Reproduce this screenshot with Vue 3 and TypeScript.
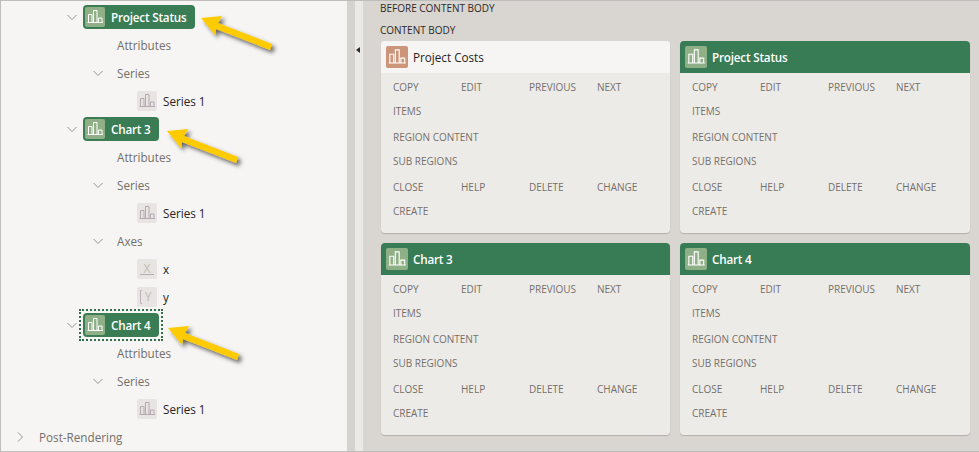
<script setup lang="ts">
type TreeRow = {
  label: string
  depth: number
  open?: boolean
  closed?: boolean
  kind?: 'region' | 'series' | 'axis-x' | 'axis-y'
  focused?: boolean
}

type Card = {
  title: string
  active: boolean
}

const rows: TreeRow[] = [
  { label: 'Project Status', depth: 2, open: true, kind: 'region' },
  { label: 'Attributes', depth: 3 },
  { label: 'Series', depth: 3, open: true },
  { label: 'Series 1', depth: 4, kind: 'series' },
  { label: 'Chart 3', depth: 2, open: true, kind: 'region' },
  { label: 'Attributes', depth: 3 },
  { label: 'Series', depth: 3, open: true },
  { label: 'Series 1', depth: 4, kind: 'series' },
  { label: 'Axes', depth: 3, open: true },
  { label: 'x', depth: 4, kind: 'axis-x' },
  { label: 'y', depth: 4, kind: 'axis-y' },
  { label: 'Chart 4', depth: 2, open: true, kind: 'region', focused: true },
  { label: 'Attributes', depth: 3 },
  { label: 'Series', depth: 3, open: true },
  { label: 'Series 1', depth: 4, kind: 'series' },
  { label: 'Post-Rendering', depth: 0, closed: true },
]

const cards: Card[] = [
  { title: 'Project Costs', active: false },
  { title: 'Project Status', active: true },
  { title: 'Chart 3', active: true },
  { title: 'Chart 4', active: true },
]

const slotGroups = [
  ['Copy', 'Edit', 'Previous', 'Next', 'Items'],
  ['Region Content', 'Sub Regions'],
  ['Close', 'Help', 'Delete', 'Change', 'Create'],
]

// tips of the three callouts, in page pixels
const arrows = [
  { x: 201, y: 18 },
  { x: 167, y: 131 },
  { x: 168, y: 328 },
]
</script>

<template>
  <div class="page">
    <svg class="defs" width="0" height="0" aria-hidden="true">
      <symbol id="bars" viewBox="0 0 20 20">
        <path
          d="M2.5 15.5H18M3.5 15V7.5H7V15M8.5 15V3.5H12V15M13.5 15v-4H17v4"
          fill="none"
          stroke="currentColor"
          stroke-width="1"
        />
      </symbol>
    </svg>

    <aside class="tree">
      <div
        v-for="(row, i) in rows"
        :key="i"
        class="row"
        :style="{ paddingLeft: 14 + row.depth * 26 + 'px' }"
      >
        <svg v-if="row.open || row.closed" class="twisty" width="12" height="12" viewBox="0 0 12 12">
          <path v-if="row.open" d="M1.5 4l4.5 4.5L10.5 4" fill="none" stroke="#98938d" stroke-width="1" />
          <path v-else d="M4 1.5L8.5 6 4 10.5" fill="none" stroke="#98938d" stroke-width="1" />
        </svg>
        <span v-else class="twisty"></span>

        <span v-if="row.kind === 'region'" class="badge-wrap" :class="{ focused: row.focused }">
          <span class="badge">
            <span class="badge-icon">
              <svg width="20" height="20"><use href="#bars" /></svg>
            </span>
            <span class="badge-text">{{ row.label }}</span>
          </span>
        </span>

        <template v-else-if="row.kind">
          <span class="leaf-icon">
            <svg v-if="row.kind === 'series'" class="series-bars" width="20" height="20"><use href="#bars" /></svg>
            <svg v-else width="20" height="20" viewBox="0 0 20 20">
              <template v-if="row.kind === 'axis-x'">
                <text x="10" y="14" text-anchor="middle" class="axis-letter">X</text>
                <path d="M3 15.5h14" stroke="#b6abb4" stroke-width="1" />
              </template>
              <template v-else>
                <text x="11" y="14" text-anchor="middle" class="axis-letter">Y</text>
                <path d="M5 3.5H3.5v13H5" fill="none" stroke="#c0b0c0" stroke-width="1" />
              </template>
            </svg>
          </span>
          <span class="leaf-text">{{ row.label }}</span>
        </template>

        <span v-else class="label">{{ row.label }}</span>
      </div>
    </aside>

    <div class="splitter">
      <span class="grip"></span>
    </div>
    <div class="gutter"></div>

    <main class="main">
      <div class="slot-title first">Before Content Body</div>
      <div class="slot-title">Content Body</div>
      <div class="cards">
        <section v-for="card in cards" :key="card.title" class="card">
          <header class="card-head" :class="{ active: card.active }">
            <span class="card-icon">
              <svg width="22" height="22"><use href="#bars" /></svg>
            </span>
            <span class="card-title">{{ card.title }}</span>
          </header>
          <div class="card-body">
            <div v-for="(group, g) in slotGroups" :key="g" class="slots">
              <span
                v-for="name in group"
                :key="name"
                class="slot"
                :class="{ wide: group.length === 2 }"
              >{{ name }}</span>
            </div>
          </div>
        </section>
      </div>
    </main>

    <svg class="arrows" width="979" height="452" viewBox="0 0 979 452">
      <defs>
        <filter id="arrow-shadow" x="-30%" y="-50%" width="170%" height="220%">
          <feDropShadow dx="3" dy="3" stdDeviation="2" flood-color="#000" flood-opacity="0.6" />
        </filter>
      </defs>
      <path
        v-for="(a, i) in arrows"
        :key="i"
        :transform="`translate(${a.x} ${a.y})`"
        d="M0 0L21 -2L17 5L71 26L69 32L15 11L14 17Z"
        fill="#fecb00"
        filter="url(#arrow-shadow)"
      />
    </svg>
  </div>
</template>

<style scoped>
.page {
  position: relative;
  display: flex;
  width: 979px;
  height: 452px;
  box-sizing: border-box;
  overflow: hidden;
  border-top: 1px solid #bdbdbb;
  border-left: 1px solid #bdbdbb;
  border-bottom: 1px solid #bdbdbb;
  background: #d9d5d0;
  font-family: 'Open Sans', 'Liberation Sans', sans-serif;
}
.defs {
  position: absolute;
}
.tree {
  width: 346px;
  flex: none;
  box-sizing: border-box;
  padding-top: 2px;
  background: #f6f5f3;
}
.row {
  display: flex;
  align-items: center;
  height: 28px;
  margin-left: -1px;
  font-size: 11.7px;
}
.twisty {
  flex: none;
  width: 12px;
  height: 12px;
}
.label {
  margin-left: 13px;
  color: #736f6a;
}
.badge-wrap {
  margin-left: 5px;
}
.badge-wrap.focused {
  outline: 2px dotted #2f6f4c;
  outline-offset: 2px;
}
.badge {
  display: flex;
  align-items: center;
  height: 24px;
  box-sizing: border-box;
  padding: 0 8px 0 2px;
  border-radius: 4px;
  background: #3a7d55;
  color: #fff;
}
.badge-icon {
  display: flex;
  width: 20px;
  height: 20px;
  border-radius: 2px;
  background: #8fb086;
}
.badge-text {
  margin-left: 6px;
  font-weight: 600;
  letter-spacing: -0.2px;
}
.leaf-icon {
  display: flex;
  width: 20px;
  height: 20px;
  margin-left: 7px;
  border-radius: 2px;
  background: #e7e4e1;
}
.series-bars {
  color: #b6a9b4;
}
.axis-letter {
  font-size: 12px;
  fill: #bfbcb8;
}
.leaf-text {
  margin-left: 6px;
  color: #26241f;
}
.splitter {
  position: relative;
  flex: none;
  width: 8px;
  background: #d6d3ce;
}
.grip {
  position: absolute;
  top: 46px;
  left: 9px;
  border-top: 3.5px solid transparent;
  border-bottom: 3.5px solid transparent;
  border-right: 4px solid #2b2b2b;
}
.gutter {
  flex: none;
  width: 8px;
  background: #ebe9e6;
}
.main {
  flex: 1;
  min-width: 0;
  padding-left: 17px;
}
.slot-title {
  height: 21px;
  line-height: 21px;
  font-size: 10px;
  color: #2d2a26;
  text-transform: uppercase;
}
.slot-title.first {
  height: 19px;
  line-height: 15px;
}
.cards {
  display: grid;
  grid-template-columns: 289px 290px;
  gap: 10px;
  margin-left: 1px;
}
.card {
  height: 192px;
  overflow: hidden;
  border-radius: 4px;
  background: #edebe8;
  box-shadow: 0 1px 1px rgba(0, 0, 0, 0.18);
}
.card-head {
  display: flex;
  align-items: center;
  height: 32px;
  padding-left: 5px;
  background: #f6f5f3;
  color: #26241f;
}
.card-head.active {
  background: #377c55;
  color: #fff;
}
.card-icon {
  display: flex;
  width: 22px;
  height: 22px;
  border-radius: 2px;
  background: #cc9479;
  color: #fff;
}
.card-head.active .card-icon {
  background: #8fb086;
}
.card-title {
  margin-left: 5px;
  font-size: 11.7px;
}
.card-head.active .card-title {
  font-weight: 600;
  letter-spacing: -0.2px;
}
.card-body {
  display: flex;
  flex-direction: column;
  gap: 2px;
  padding: 2px 0 0 12px;
}
.slots {
  display: grid;
  grid-template-columns: repeat(4, 68px);
  grid-auto-rows: 24px;
}
.slot {
  line-height: 24px;
  font-size: 10px;
  color: #74706b;
  text-transform: uppercase;
  white-space: nowrap;
}
.slot.wide {
  grid-column: 1 / -1;
}
.arrows {
  position: absolute;
  top: -1px;
  left: -1px;
  pointer-events: none;
}
</style>
